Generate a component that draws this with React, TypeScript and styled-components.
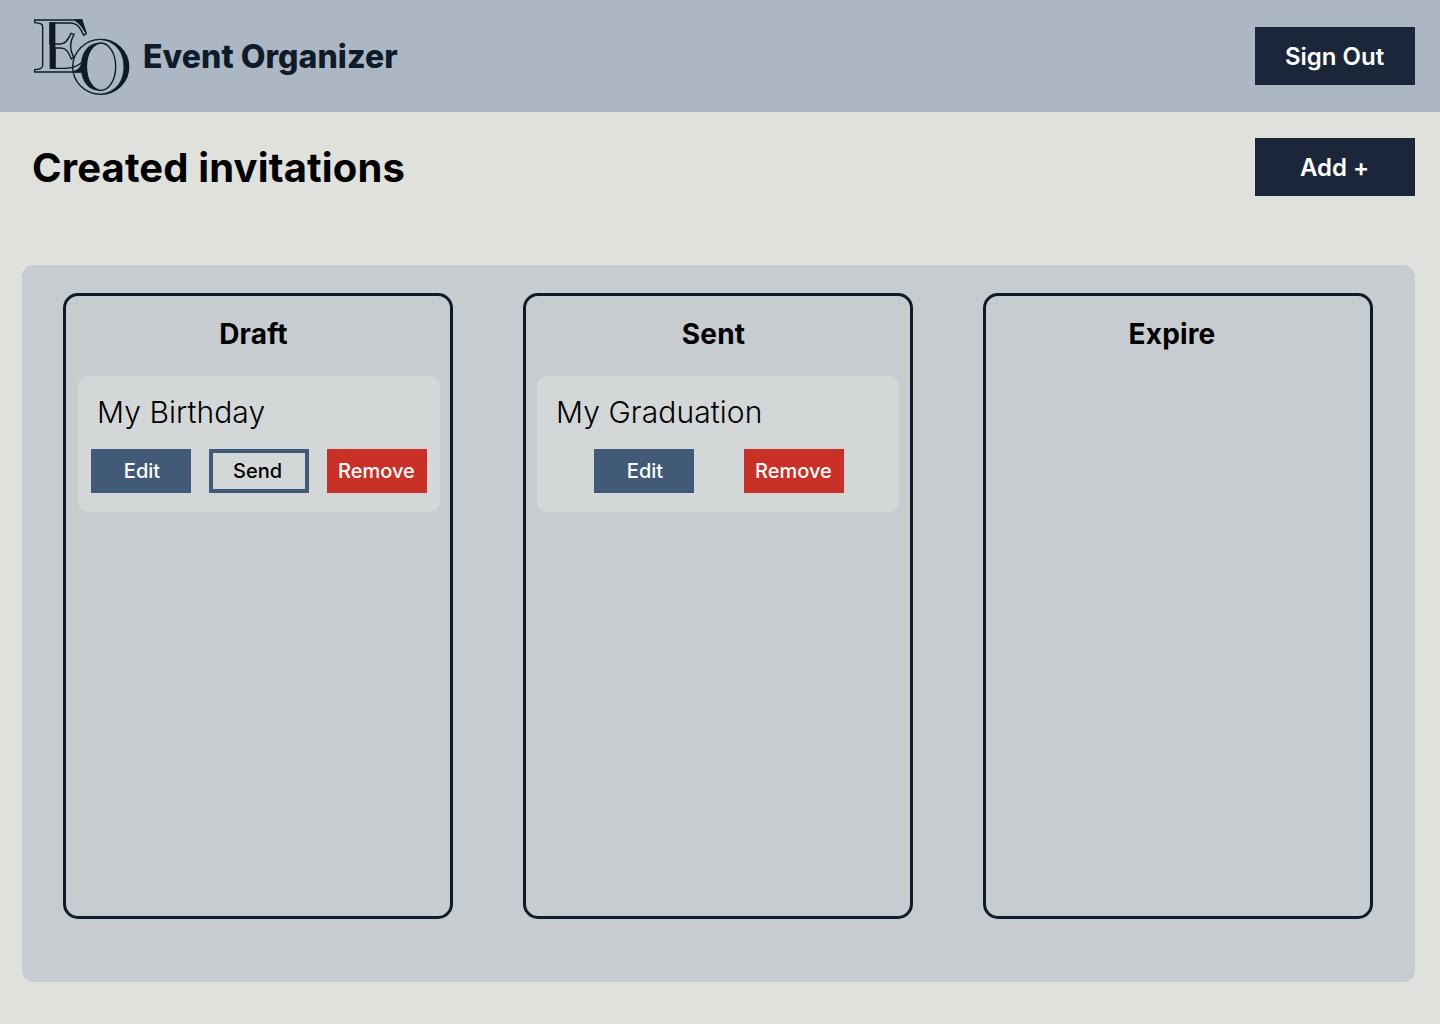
import React from "react";
import styled, { createGlobalStyle } from "styled-components";

const color = {
  ink: "#0d1b2a",
  navy: "#1b263b",
  steel: "#415a77",
  header: "#acb7c3",
  page: "#e0e1dd",
  board: "#c6ccd0",
  card: "#d3d7d7",
  danger: "#c93127",
};

const GlobalStyle = createGlobalStyle`
  *, *::before, *::after { box-sizing: border-box; }
  body {
    margin: 0;
    background: ${color.page};
    color: #000;
    font-family: Inter, "Liberation Sans", sans-serif;
  }
  h1, h2, h3, p { margin: 0; }
`;

const Page = styled.div`
  display: flex;
  flex-direction: column;
  min-height: 1024px;
`;

const Header = styled.header`
  display: flex;
  align-items: center;
  justify-content: space-between;
  height: 112px;
  padding: 0 25px 0 24px;
  background: ${color.header};
`;

const Brand = styled.div`
  display: flex;
  align-items: center;
  color: ${color.ink};
`;

const LogoMark = styled.svg`
  display: block;
  width: 118px;
  height: 95px;
  margin-top: 3px;
`;

const BrandName = styled.p`
  padding-left: 1px;
  font-size: 32px;
  font-weight: 800;
  line-height: 39px;
  letter-spacing: 0.05px;
`;

const PrimaryButton = styled.button`
  width: 160px;
  height: 58px;
  padding: 0 1px 0 0;
  border: 0;
  background: ${color.navy};
  color: #fff;
  font: 600 24px/29px Inter, "Liberation Sans", sans-serif;
`;

const TitleBar = styled.div`
  display: flex;
  align-items: center;
  justify-content: space-between;
  height: 110px;
  padding: 0 25px 0 32px;
`;

const PageTitle = styled.h1`
  padding-top: 2px;
  font-size: 40px;
  font-weight: 700;
  line-height: 48px;
  letter-spacing: 0.14px;
`;

const Board = styled.main`
  display: flex;
  gap: 70px;
  height: 717px;
  margin: 43px 25px 0 22px;
  padding: 28px 41px 63px;
  border-radius: 12px;
  background: ${color.board};
`;

const Column = styled.section`
  width: 390px;
  padding: 21px 10px 0 12px;
  border: 3px solid ${color.ink};
  border-radius: 15px;
`;

const ColumnTitle = styled.h2<{ $shift: number }>`
  margin-bottom: 25px;
  padding-right: ${(p) => p.$shift}px;
  font-size: 28px;
  font-weight: 700;
  line-height: 34px;
  text-align: center;
  letter-spacing: 0.15px;
`;

const Card = styled.article<{ $nudge: number }>`
  width: 362px;
  height: 136px;
  margin-left: ${(p) => p.$nudge}px;
  padding: 18px 13px 0;
  border-radius: 10px;
  background: ${color.card};
`;

const CardTitle = styled.h3`
  margin: 0 0 19px 6px;
  font-size: 30px;
  font-weight: 300;
  line-height: 36px;
  letter-spacing: 0.08px;
`;

const Actions = styled.div<{ $pair: boolean }>`
  display: flex;
  justify-content: center;
  gap: ${(p) => (p.$pair ? 50 : 18)}px;
  padding-left: ${(p) => (p.$pair ? 2 : 0)}px;
`;

const ActionButton = styled.button<{ $kind: "edit" | "send" | "remove" }>`
  width: 100px;
  height: 44px;
  padding: ${(p) => (p.$kind === "edit" ? "0 0 0 2px" : p.$kind === "send" ? "0 3px 0 0" : "0 1px 0 0")};
  border: ${(p) => (p.$kind === "send" ? `4px solid ${color.steel}` : "0")};
  background: ${(p) =>
    p.$kind === "edit" ? color.steel : p.$kind === "remove" ? color.danger : "transparent"};
  color: ${(p) => (p.$kind === "send" ? "#000" : "#fff")};
  font: 500 20px/24px Inter, "Liberation Sans", sans-serif;
`;

const Logo = () => (
  <LogoMark viewBox="0 0 354 285" fill="none" stroke="currentColor" strokeWidth="4.2" aria-hidden="true">
    {/* serif E: outline, stem shade, arm shade, foot shade */}
    <path d="M178 186H32V179C50 177 56 175 56 166V50C56 42 50 40 32 38V30H173L187 71L179 76C170 54 160 39 138 39H78V102H110C126 102 134 86 141 70L150 73C139 92 136 118 149 142L142 147C132 124 126 114 110 114H93V175H120C152 175 174 164 189 138" />
    <path d="M79 39H92V175H79Z" fill="currentColor" />
    <path d="M152 30H173L184 66C176 50 168 38 152 30Z" fill="currentColor" />
    <path d="M150 185C160 182 168 176 172 166L182 185Z" fill="currentColor" />
    {/* O: outer ring with right shade, counter with left shade */}
    <ellipse cx="230" cy="170.500" rx="84" ry="82.500" />
    <path
      d="M230 88A84 82.500 0 0 1 230 253C268 246 299 222 299 170C299 119 268 95 230 88Z"
      fill="currentColor"
      strokeWidth="1"
    />
    <ellipse cx="231" cy="170" rx="44" ry="71" />
    <path
      d="M231 99C190 96 171 132 171 170C171 208 190 244 231 241C203 238 188 208 188 170C188 132 203 102 231 99Z"
      fill="currentColor"
      strokeWidth="1"
    />
  </LogoMark>
);

type Invitation = { title: string; actions: ("edit" | "send" | "remove")[] };

const labels = { edit: "Edit", send: "Send", remove: "Remove" };

const columns: { title: string; shift: number; nudge: number; items: Invitation[] }[] = [
  {
    title: "Draft",
    shift: 11,
    nudge: 0,
    items: [{ title: "My Birthday", actions: ["edit", "send", "remove"] }],
  },
  {
    title: "Sent",
    shift: 11,
    nudge: -1,
    items: [{ title: "My Graduation", actions: ["edit", "remove"] }],
  },
  { title: "Expire", shift: 14, nudge: 0, items: [] },
];

export default function App() {
  return (
    <Page>
      <GlobalStyle />
      <Header>
        <Brand>
          <Logo />
          <BrandName>Event Organizer</BrandName>
        </Brand>
        <PrimaryButton>Sign Out</PrimaryButton>
      </Header>
      <TitleBar>
        <PageTitle>Created invitations</PageTitle>
        <PrimaryButton>Add +</PrimaryButton>
      </TitleBar>
      <Board>
        {columns.map((column) => (
          <Column key={column.title}>
            <ColumnTitle $shift={column.shift}>{column.title}</ColumnTitle>
            {column.items.map((item) => (
              <Card key={item.title} $nudge={column.nudge}>
                <CardTitle>{item.title}</CardTitle>
                <Actions $pair={item.actions.length === 2}>
                  {item.actions.map((kind) => (
                    <ActionButton key={kind} $kind={kind}>
                      {labels[kind]}
                    </ActionButton>
                  ))}
                </Actions>
              </Card>
            ))}
          </Column>
        ))}
      </Board>
    </Page>
  );
}
